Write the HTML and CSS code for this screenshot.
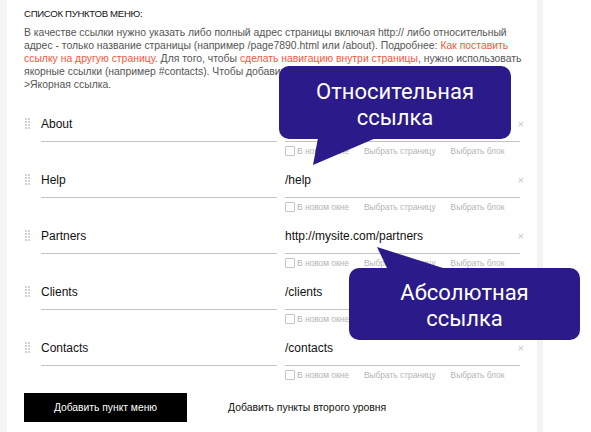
FILE: index.html
```html
<!DOCTYPE html>
<html lang="ru">
<head>
<meta charset="utf-8">
<link rel="stylesheet" href="styles.css">
</head>
<body>
<div class="panel">
  <div class="title">СПИСОК ПУНКТОВ МЕНЮ:</div>
  <p class="hint">В качестве ссылки нужно указать либо полный адрес страницы включая http:// либо относительный<br>адрес - только название страницы (например /page7890.html или /about). Подробнее: <a class="lnk">Как поставить</a><br><a class="lnk">ссылку на другую страницу</a>. Для того, чтобы <a class="lnk">сделать навигацию внутри страницы</a>, нужно использовать<br>якорные ссылки (например #contacts). Чтобы добавить якорь, выберите Контент<br>&gt;Якорная ссылка.</p>

  <div class="rows">
    <div class="row">
      <svg class="handle" width="6" height="12" viewBox="0 0 6 12"><g fill="#d2d2d2"><rect x="0" y="0" width="2" height="2"/><rect x="3" y="0" width="2" height="2"/><rect x="0" y="3" width="2" height="2"/><rect x="3" y="3" width="2" height="2"/><rect x="0" y="6" width="2" height="2"/><rect x="3" y="6" width="2" height="2"/><rect x="0" y="9" width="2" height="2"/><rect x="3" y="9" width="2" height="2"/></g></svg>
      <div class="field name">About</div>
      <div class="linkcol">
        <div class="field url"><span></span><span class="del">×</span></div>
        <div class="opts"><span class="chk"></span><span class="o1">В новом окне</span><span class="o2">Выбрать страницу</span><span class="o3">Выбрать блок</span></div>
      </div>
    </div>
    <div class="row">
      <svg class="handle" width="6" height="12" viewBox="0 0 6 12"><g fill="#d2d2d2"><rect x="0" y="0" width="2" height="2"/><rect x="3" y="0" width="2" height="2"/><rect x="0" y="3" width="2" height="2"/><rect x="3" y="3" width="2" height="2"/><rect x="0" y="6" width="2" height="2"/><rect x="3" y="6" width="2" height="2"/><rect x="0" y="9" width="2" height="2"/><rect x="3" y="9" width="2" height="2"/></g></svg>
      <div class="field name">Help</div>
      <div class="linkcol">
        <div class="field url"><span>/help</span><span class="del">×</span></div>
        <div class="opts"><span class="chk"></span><span class="o1">В новом окне</span><span class="o2">Выбрать страницу</span><span class="o3">Выбрать блок</span></div>
      </div>
    </div>
    <div class="row">
      <svg class="handle" width="6" height="12" viewBox="0 0 6 12"><g fill="#d2d2d2"><rect x="0" y="0" width="2" height="2"/><rect x="3" y="0" width="2" height="2"/><rect x="0" y="3" width="2" height="2"/><rect x="3" y="3" width="2" height="2"/><rect x="0" y="6" width="2" height="2"/><rect x="3" y="6" width="2" height="2"/><rect x="0" y="9" width="2" height="2"/><rect x="3" y="9" width="2" height="2"/></g></svg>
      <div class="field name">Partners</div>
      <div class="linkcol">
        <div class="field url"><span>http://mysite.com/partners</span><span class="del">×</span></div>
        <div class="opts"><span class="chk"></span><span class="o1">В новом окне</span><span class="o2">Выбрать страницу</span><span class="o3">Выбрать блок</span></div>
      </div>
    </div>
    <div class="row">
      <svg class="handle" width="6" height="12" viewBox="0 0 6 12"><g fill="#d2d2d2"><rect x="0" y="0" width="2" height="2"/><rect x="3" y="0" width="2" height="2"/><rect x="0" y="3" width="2" height="2"/><rect x="3" y="3" width="2" height="2"/><rect x="0" y="6" width="2" height="2"/><rect x="3" y="6" width="2" height="2"/><rect x="0" y="9" width="2" height="2"/><rect x="3" y="9" width="2" height="2"/></g></svg>
      <div class="field name">Clients</div>
      <div class="linkcol">
        <div class="field url"><span>/clients</span><span class="del">×</span></div>
        <div class="opts"><span class="chk"></span><span class="o1">В новом окне</span><span class="o2">Выбрать страницу</span><span class="o3">Выбрать блок</span></div>
      </div>
    </div>
    <div class="row">
      <svg class="handle" width="6" height="12" viewBox="0 0 6 12"><g fill="#d2d2d2"><rect x="0" y="0" width="2" height="2"/><rect x="3" y="0" width="2" height="2"/><rect x="0" y="3" width="2" height="2"/><rect x="3" y="3" width="2" height="2"/><rect x="0" y="6" width="2" height="2"/><rect x="3" y="6" width="2" height="2"/><rect x="0" y="9" width="2" height="2"/><rect x="3" y="9" width="2" height="2"/></g></svg>
      <div class="field name">Contacts</div>
      <div class="linkcol">
        <div class="field url"><span>/contacts</span><span class="del">×</span></div>
        <div class="opts"><span class="chk"></span><span class="o1">В новом окне</span><span class="o2">Выбрать страницу</span><span class="o3">Выбрать блок</span></div>
      </div>
    </div>
  </div>

  <div class="actions">
    <div class="btn">Добавить пункт меню</div>
    <div class="second">Добавить пункты второго уровня</div>
  </div>

  <div class="callout c1">Относительная<br>ссылка<svg class="tail t1" width="70" height="28" viewBox="0 0 70 28"><polygon points="9,0 67,0 4,27" fill="#2a1a8a"/></svg></div>
  <div class="callout c2">Абсолютная<br>ссылка<svg class="tail t2" width="70" height="22" viewBox="0 0 70 22"><polygon points="0,0 66,21 10,21" fill="#2a1a8a"/></svg></div>
</div>
</body>
</html>
```
FILE: styles.css
```css
* { box-sizing: border-box; }
html, body { margin: 0; padding: 0; background: #fff; }
body { font-family: "Liberation Sans", Arial, sans-serif; }

.panel {
  position: relative;
  width: 543px;
  height: 432px;
  border-left: 7px solid #f5f5f5;
  border-right: 6px solid #f3f3f3;
  padding: 7px 0 0 17px;
}

.title {
  font-size: 9.6px;
  line-height: 13px;
  letter-spacing: -0.3px;
  color: #111;
  margin-bottom: 6px;
}

.hint {
  margin: 0;
  font-size: 10.4px;
  line-height: 13px;
  color: #555;
  white-space: nowrap;
}
.lnk { color: #f4573c; }

.rows { margin-top: 16px; }

.row {
  display: flex;
  height: 56px;
}
.handle { margin: 11px 0 0 1px; width: 6px; height: 12px; flex: none; }

.field {
  height: 35px;
  border-bottom: 1px solid #c4c4c4;
  display: flex;
  align-items: center;
  font-size: 12px;
  color: #111;
}
.name { width: 236px; margin-left: 10px; }
.linkcol { width: 235px; margin-left: 8px; }
.url { justify-content: space-between; position: relative; }
.del { position: absolute; right: -4px; font-size: 11px; color: #c8c8c8; }

.opts {
  display: flex;
  align-items: center;
  height: 12px;
  margin-top: 3px;
  font-size: 8.4px;
  color: #b4b4b4;
}
.chk {
  width: 10px; height: 10px;
  border: 1px solid #c4c4c4;
  border-radius: 1px;
  margin-right: 2px;
}
.o2 { margin-left: 15px; }
.o3 { margin-left: 15px; }

.actions {
  display: flex;
  align-items: center;
  margin-top: 6px;
}
.btn {
  width: 163px;
  height: 29px;
  background: #000;
  color: #fff;
  font-size: 10.3px;
  display: flex;
  align-items: center;
  justify-content: center;
}
.second {
  margin-left: 41px;
  font-size: 10.4px;
  color: #111;
}

.callout {
  position: absolute;
  background: #2a1a8a;
  color: #fff;
  border-radius: 10px;
  font-family: Roboto, "Noto Sans", sans-serif;
  font-size: 22px;
  line-height: 26px;
  text-align: center;
}
.c1 { left: 272px; top: 66px; width: 232px; height: 73px; padding-top: 13px; }
.c2 { left: 342px; top: 268px; width: 231px; height: 72px; padding-top: 12px; }
.tail { position: absolute; }
.t1 { left: 30px; top: 72px; }
.t2 { left: 28px; top: -21px; }
```
